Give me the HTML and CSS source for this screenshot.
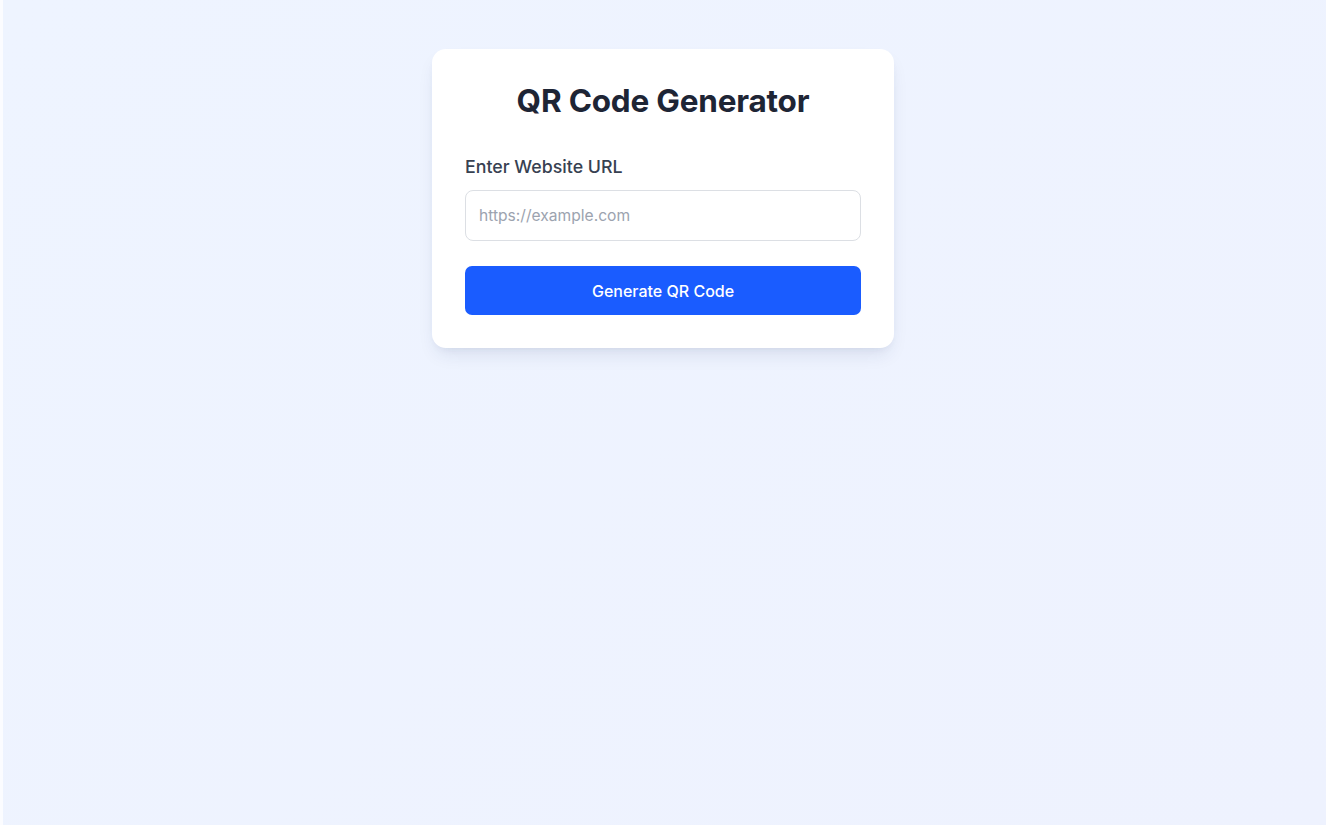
FILE: index.html
```html
<!DOCTYPE html>
<html lang="en">
<head>
<meta charset="utf-8">
<title>QR Code Generator</title>
<link rel="stylesheet" href="styles.css">
</head>
<body>
<main class="page">
  <section class="card">
    <h1 class="title">QR Code Generator</h1>
    <label class="label" for="url">Enter Website URL</label>
    <input class="input" id="url" type="text" placeholder="https://example.com">
    <button class="button" type="button">Generate QR Code</button>
  </section>
</main>
</body>
</html>
```

FILE: styles.css
```css
html {
  background: #fbfcff;
}
body {
  margin: 0 0 0 3px;
  font-family: Inter, "Noto Sans", sans-serif;
}
.page {
  min-height: 825px;
  box-sizing: border-box;
  padding-top: 49px;
  display: flex;
  justify-content: center;
  align-items: flex-start;
  background: linear-gradient(135deg, #eef4ff 0%, #eef2fe 100%);
}
.card {
  width: 462px;
  box-sizing: border-box;
  margin-left: -3px;
  padding: 33px 33px 33px;
  background: #ffffff;
  border-radius: 14px;
  box-shadow: 0 10px 18px -4px rgba(30, 50, 100, 0.10), 0 4px 8px -4px rgba(30, 50, 100, 0.08);
  display: flex;
  flex-direction: column;
}
.title {
  margin: 0 0 35px;
  text-align: center;
  font-size: 31.5px;
  line-height: 38px;
  font-weight: 700;
  color: #1e2535;
  letter-spacing: -0.2px;
}
.label {
  font-size: 17.8px;
  line-height: 24px;
  font-weight: 500;
  color: #374151;
  margin-bottom: 11px;
}
.input {
  height: 51px;
  box-sizing: border-box;
  border: 1px solid #dcdfe4;
  border-radius: 8px;
  padding: 0 13px;
  font-family: inherit;
  font-size: 15.6px;
  color: #111827;
  outline: none;
  margin: 0 0 25px;
}
.input::placeholder {
  color: #9ca3af;
}
.button {
  height: 49px;
  border: 0;
  border-radius: 7px;
  background: #1a5cff;
  color: #ffffff;
  font-family: inherit;
  font-size: 16px;
  font-weight: 500;
  cursor: pointer;
}
```
